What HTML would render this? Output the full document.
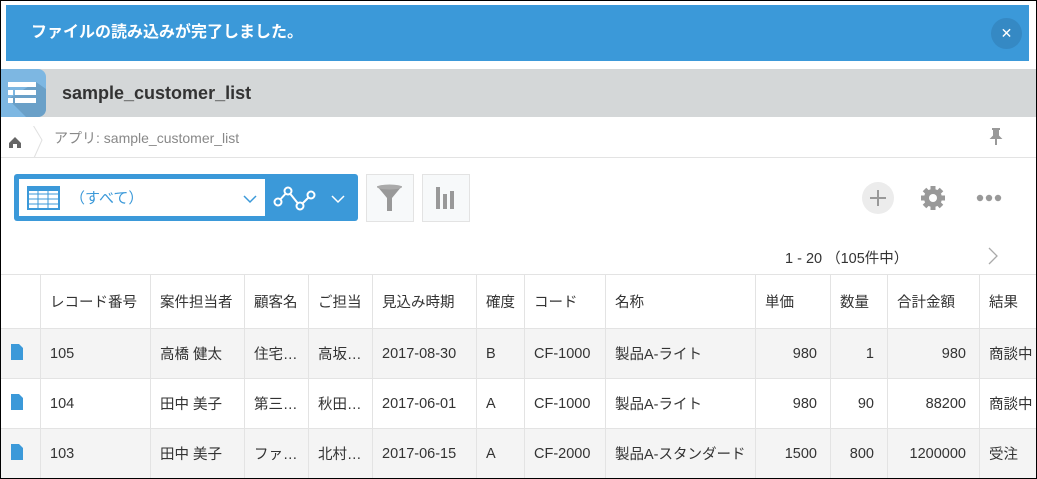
<!DOCTYPE html>
<html><head><meta charset="utf-8"><style>
*{margin:0;padding:0;box-sizing:border-box}
body{width:1037px;height:479px;overflow:hidden;background:#fff;font-family:"Liberation Sans","Noto Sans CJK JP",sans-serif;position:relative;color:#333}
.frame{position:absolute;left:0;top:0;width:1037px;height:479px;border:1px solid #000;z-index:10;pointer-events:none}
.abs{position:absolute}
.banner{left:6px;top:5px;width:1023px;height:56px;background:#3b99d9;color:#fff;font-weight:bold;font-size:16px;line-height:56px;padding-left:25px}
.close{left:991px;top:18px;width:31px;height:31px;border-radius:50%;background:#3589c4;color:#fff;text-align:center;line-height:31px;font-size:14px}
.hdr{left:0;top:69px;width:1037px;height:48px;background:#d4d7d8}
.title{left:62px;top:69px;line-height:48px;font-size:18px;font-weight:bold;color:#333}
.icon{left:1px;top:69px;width:45px;height:48px;background:#7db7e2;border-radius:0 8px 8px 0;overflow:hidden}
.bc{left:0;top:157px;width:1037px;height:1px;background:#e3e3e3}
table{position:absolute;left:0;top:274px;width:1049px;border-collapse:collapse;font-size:14.5px;table-layout:fixed}
td{border-left:1px solid #e3e3e3;border-top:1px solid #e3e3e3;padding:0 9px;white-space:nowrap;overflow:hidden;height:50px}
tr.h td{height:54px;color:#333}
tr.g td{background:#f4f4f4}
td.r{text-align:right;padding:0 13px 0 6px}
</style></head><body>
<div class="frame"></div>
<div class="abs banner">ファイルの読み込みが完了しました。</div>
<div class="abs close">✕</div>
<div class="abs hdr"></div>
<div class="abs icon"><svg width="45" height="48"><path d="M7 30 L25 48 H45 V20 L35 13Z" fill="#6aa0c8"/><g fill="#fff"><rect x="7" y="13" width="28" height="5"/><rect x="7" y="21" width="5" height="5"/><rect x="14" y="21" width="21" height="5"/><rect x="7" y="29" width="5" height="5"/><rect x="14" y="29" width="21" height="5"/></g></svg></div>
<div class="abs title">sample_customer_list</div>
<svg class="abs" style="left:6px;top:126px" width="40" height="32"><path d="M3 17 L9 11 L15 17 V22 H11 V18 H7 V22 H3Z" fill="#666"/><path d="M27 -1 L36 14 L28 32" stroke="#e0e0e0" fill="none"/></svg>
<div class="abs" style="left:54px;top:128px;font-size:14px;color:#888">アプリ: sample_customer_list</div>
<svg class="abs" style="left:989px;top:127px" width="16" height="20"><path d="M3 2H11M5 2V9L3 11H11L9 9V2M7 11V18" stroke="#999" stroke-width="2" fill="#999"/></svg>
<div class="abs bc"></div>
<div class="abs" style="left:14px;top:174px;width:344px;height:47px;background:#3b99d9;border-radius:3px"></div>
<div class="abs" style="left:19px;top:179px;width:246px;height:37px;background:#fff"></div>
<svg class="abs" style="left:27px;top:186px" width="34" height="26"><rect x="1" y="1" width="31" height="22" fill="#fff" stroke="#3b99d9" stroke-width="2"/><g stroke="#3b99d9"><path d="M1 8H32M1 13H32M1 18H32M11 1V23M21 1V23"/></g><rect x="1" y="1" width="31" height="4" fill="#3b99d9"/></svg>
<div class="abs" style="left:70px;top:187px;font-size:15px;color:#3b99d9">（すべて）</div>
<svg class="abs" style="left:242px;top:193px" width="16" height="12"><path d="M2 3L8 9L14 3" stroke="#3b99d9" fill="none" stroke-width="1.5"/></svg>
<svg class="abs" style="left:273px;top:183px" width="46" height="30"><path d="M5 19L15 8L27 23L38 12" stroke="#fff" stroke-width="2" fill="none"/><g fill="#3b99d9" stroke="#fff" stroke-width="2"><circle cx="5" cy="19" r="3.5"/><circle cx="15" cy="8" r="3.5"/><circle cx="27" cy="23" r="3.5"/><circle cx="38" cy="12" r="3.5"/></g></svg>
<svg class="abs" style="left:330px;top:193px" width="16" height="12"><path d="M2 3L8 9L14 3" stroke="#fff" fill="none" stroke-width="1.5"/></svg>
<div class="abs" style="left:366px;top:174px;width:48px;height:48px;border:1px solid #e3e3e3;background:#f7f9fa"></div>
<svg class="abs" style="left:375px;top:183px" width="30" height="30"><path d="M2 3H27L17 15V28H12V15Z" fill="#999"/><ellipse cx="14.5" cy="4" rx="12.5" ry="2.5" fill="#aaa"/></svg>
<div class="abs" style="left:422px;top:174px;width:48px;height:48px;border:1px solid #e3e3e3;background:#f7f9fa"></div>
<svg class="abs" style="left:431px;top:183px" width="30" height="30"><g fill="#999"><rect x="5" y="4" width="4" height="22"/><rect x="12" y="11" width="4" height="15"/><rect x="19" y="8" width="4" height="18"/></g></svg>
<div class="abs" style="left:862px;top:182px;width:32px;height:32px;border-radius:50%;background:#ececec"></div>
<svg class="abs" style="left:862px;top:182px" width="32" height="32"><path d="M16 8V24M8 16H24" stroke="#999" stroke-width="2"/></svg>
<svg class="abs" style="left:919px;top:184px" width="28" height="28"><g fill="#999"><circle cx="14" cy="14" r="9"/><g stroke="#999" stroke-width="5"><path d="M14 2V26M2 14H26M5.5 5.5L22.5 22.5M22.5 5.5L5.5 22.5"/></g></g><circle cx="14" cy="14" r="4" fill="#fff"/></svg>
<svg class="abs" style="left:975px;top:192px" width="28" height="12"><g fill="#999"><circle cx="5" cy="6" r="3.2"/><circle cx="14" cy="6" r="3.2"/><circle cx="23" cy="6" r="3.2"/></g></svg>
<div class="abs" style="left:785px;top:247px;font-size:14.5px;color:#333">1 - 20 （105件中）</div>
<svg class="abs" style="left:986px;top:246px" width="14" height="20"><path d="M3 2L11 10L3 18" stroke="#aaa" fill="none" stroke-width="1.3"/></svg>
<table>
<colgroup><col style="width:40px"><col style="width:110px"><col style="width:94px"><col style="width:64px"><col style="width:64px"><col style="width:104px"><col style="width:48px"><col style="width:81px"><col style="width:150px"><col style="width:75px"><col style="width:57px"><col style="width:92px"><col style="width:70px"></colgroup>
<tr class="h"><td></td><td>レコード番号</td><td>案件担当者</td><td>顧客名</td><td>ご担当</td><td>見込み時期</td><td>確度</td><td>コード</td><td>名称</td><td>単価</td><td>数量</td><td>合計金額</td><td>結果</td></tr>
<tr class="g"><td><svg width="14" height="18"><path d="M1 1H9L13 5V17H1Z" fill="#3b99d9"/></svg></td><td>105</td><td>高橋 健太</td><td>住宅…</td><td>高坂…</td><td>2017-08-30</td><td>B</td><td>CF-1000</td><td>製品A-ライト</td><td class="r">980</td><td class="r">1</td><td class="r">980</td><td>商談中</td></tr>
<tr><td><svg width="14" height="18"><path d="M1 1H9L13 5V17H1Z" fill="#3b99d9"/></svg></td><td>104</td><td>田中 美子</td><td>第三…</td><td>秋田…</td><td>2017-06-01</td><td>A</td><td>CF-1000</td><td>製品A-ライト</td><td class="r">980</td><td class="r">90</td><td class="r">88200</td><td>商談中</td></tr>
<tr class="g"><td><svg width="14" height="18"><path d="M1 1H9L13 5V17H1Z" fill="#3b99d9"/></svg></td><td>103</td><td>田中 美子</td><td>ファ…</td><td>北村…</td><td>2017-06-15</td><td>A</td><td>CF-2000</td><td>製品A-スタンダード</td><td class="r">1500</td><td class="r">800</td><td class="r">1200000</td><td>受注</td></tr>
</table>
</body></html>
